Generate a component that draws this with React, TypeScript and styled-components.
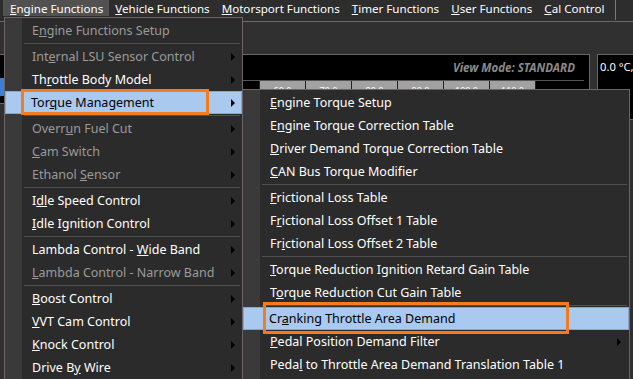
import React from "react";
import styled, { createGlobalStyle } from "styled-components";

const GlobalStyle = createGlobalStyle`
  html, body {
    margin: 0;
    padding: 0;
    background: #2f2f2f;
  }
  body {
    font-family: "Noto Sans", "Open Sans", sans-serif;
    font-size: 12px;
  }
`;

const Screen = styled.div`
  position: relative;
  width: 633px;
  height: 379px;
  overflow: hidden;
  background: #303030;
`;

const MenuBar = styled.div`
  display: flex;
  align-items: stretch;
  height: 22px;
  padding-left: 3px;
  background: #2d2d2d;
  border-bottom: 1px solid #6a6a6a;
  box-sizing: border-box;
`;

const BarItem = styled.div<{ $active?: boolean }>`
  display: flex;
  align-items: center;
  height: 16px;
  padding: 0 6px;
  color: #ffffff;
  font-size: 11.6px;
  background: ${(p) => (p.$active ? "#515151" : "transparent")};
  white-space: nowrap;

  &:first-child {
    padding: 0 6px 0 7px;
  }
`;

const BarDivider = styled.div`
  width: 1px;
  height: 20px;
  margin-left: 5px;
  background: #7a7a7a;
`;

const Workspace = styled.div`
  display: flex;
  gap: 7px;
  padding: 32px 0 0 0;
`;

const MainPanel = styled.div`
  flex: 0 0 590px;
  height: 50px;
  background: #000;
  border: 1px solid #666;
  border-left: none;
  box-sizing: border-box;
  display: flex;
  flex-direction: column;
`;

const PanelHead = styled.div`
  height: 25px;
  display: flex;
  align-items: center;
  justify-content: flex-end;
  padding-right: 14px;
  color: #8a8a8a;
  font-style: italic;
  font-weight: 700;
  font-size: 11.5px;
`;

const AxisRow = styled.div`
  display: flex;
  height: 16px;
  margin-right: 5px;
  border-top: 1px solid #555;
`;

const AxisCell = styled.div<{ $empty?: boolean }>`
  flex: ${(p) => (p.$empty ? "1" : "0 0 45px")};
  background: ${(p) => (p.$empty ? "#000" : "#a2a2a2")};
  border-left: 1px solid #222;
  color: #fff;
  font-size: 9px;
  line-height: 14px;
  padding-top: 3px;
  text-align: center;
`;

const SidePanel = styled.div`
  flex: 1;
  height: 60px;
  background: #000;
  border: 1px solid #666;
  border-right: none;
  color: #fff;
  padding: 4px 0 0 2px;
  font-size: 11.2px;
  white-space: nowrap;
  overflow: hidden;
`;

const Menu = styled.div<{ $left: number; $top: number; $width: number }>`
  position: absolute;
  left: ${(p) => p.$left}px;
  top: ${(p) => p.$top}px;
  width: ${(p) => p.$width}px;
  padding: 1px 0 20px;
  background: linear-gradient(
    to right,
    #3a3a3a 0,
    #3a3a3a 17px,
    #2b2b2b 17px
  );
  border: 1px solid #6c6468;
  box-sizing: border-box;
  font-size: 12.5px;
`;

const Row = styled.div<{ $dim?: boolean; $hot?: boolean }>`
  position: relative;
  display: flex;
  align-items: center;
  height: 23px;
  padding-left: ${(p) => (p.$hot ? "25px" : "26px")};
  margin: 0 ${(p) => (p.$hot ? "0" : "1px")};
  color: ${(p) => (p.$hot ? "#000" : p.$dim ? "#9b9b9b" : "#fff")};
  background: ${(p) => (p.$hot ? "#a9c9ee" : "transparent")};
  border: ${(p) => (p.$hot ? "1px solid #8aa6cc" : "none")};
  box-sizing: border-box;
  white-space: nowrap;
`;

const Arrow = styled.span<{ $right: number }>`
  position: absolute;
  right: ${(p) => p.$right}px;
  top: 50%;
  margin-top: -4px;
  width: 0;
  height: 0;
  border-top: 4px solid transparent;
  border-bottom: 4px solid transparent;
  border-left: 4px solid #000;
`;

const Separator = styled.div`
  height: 1px;
  margin: 1px 2px 1px 19px;
  background: #505050;
`;

const Callout = styled.div<{ $l: number; $t: number; $w: number; $h: number }>`
  position: absolute;
  left: ${(p) => p.$l}px;
  top: ${(p) => p.$t}px;
  width: ${(p) => p.$w}px;
  height: ${(p) => p.$h}px;
  border: 3px solid #f47b20;
  box-sizing: border-box;
  pointer-events: none;
`;

const LeftStrip = styled.div`
  position: absolute;
  left: 0;
  top: 78px;
  width: 4px;
  height: 18px;
  background: #3b7fd6;
`;

type Item = {
  label: React.ReactNode;
  dim?: boolean;
  hot?: boolean;
  sub?: boolean;
  sep?: boolean;
};

const mn = (before: string, key: string, after: string) => (
  <span>
    {before}
    <u>{key}</u>
    {after}
  </span>
);

const engineItems: Item[] = [
  { label: mn("E", "n", "gine Functions Setup"), dim: true },
  { sep: true, label: null },
  { label: mn("Int", "e", "rnal LSU Sensor Control"), dim: true, sub: true },
  { label: mn("Th", "r", "ottle Body Model"), sub: true },
  { label: mn("Tor", "q", "ue Management"), hot: true, sub: true },
  { sep: true, label: null },
  { label: mn("Overr", "u", "n Fuel Cut"), dim: true, sub: true },
  { label: mn("", "C", "am Switch"), dim: true, sub: true },
  { label: mn("Ethanol ", "S", "ensor"), dim: true, sub: true },
  { sep: true, label: null },
  { label: mn("I", "dl", "e Speed Control"), sub: true },
  { label: mn("", "I", "dle Ignition Control"), sub: true },
  { sep: true, label: null },
  { label: mn("Lambda Control - ", "W", "ide Band"), sub: true },
  { label: mn("", "L", "ambda Control - Narrow Band"), dim: true, sub: true },
  { sep: true, label: null },
  { label: mn("", "B", "oost Control"), sub: true },
  { label: mn("", "V", "VT Cam Control"), sub: true },
  { label: mn("", "K", "nock Control"), sub: true },
  { label: mn("Drive B", "y", " Wire"), sub: true },
];

const torqueItems: Item[] = [
  { label: mn("", "E", "ngine Torque Setup") },
  { label: mn("E", "n", "gine Torque Correction Table") },
  { label: mn("", "D", "river Demand Torque Correction Table") },
  { label: mn("", "C", "AN Bus Torque Modifier") },
  { sep: true, label: null },
  { label: mn("", "F", "rictional Loss Table") },
  { label: mn("F", "r", "ictional Loss Offset 1 Table") },
  { label: mn("Fr", "i", "ctional Loss Offset 2 Table") },
  { sep: true, label: null },
  { label: mn("", "T", "orque Reduction Ignition Retard Gain Table") },
  { label: mn("T", "o", "rque Reduction Cut Gain Table") },
  { sep: true, label: null },
  { label: mn("Cr", "a", "nking Throttle Area Demand"), hot: true },
  { label: mn("", "P", "edal Position Demand Filter"), sub: true },
  { label: mn("Peda", "l", " to Throttle Area Demand Translation Table 1") },
];

function MenuList({ items, arrowRight }: { items: Item[]; arrowRight: number }) {
  return (
    <>
      {items.map((item, i) =>
        item.sep ? (
          <Separator key={i} />
        ) : (
          <Row key={i} $dim={item.dim} $hot={item.hot}>
            {item.label}
            {item.sub && <Arrow $right={arrowRight} />}
          </Row>
        ),
      )}
    </>
  );
}

const barItems = [
  mn("", "E", "ngine Functions"),
  mn("", "V", "ehicle Functions"),
  mn("", "M", "otorsport Functions"),
  mn("", "T", "imer Functions"),
  mn("", "U", "ser Functions"),
  mn("", "C", "al Control"),
];

const axis = ["60.0", "70.0", "80.0", "90.0", "100.0", "110.0"];

export default function App() {
  return (
    <Screen>
      <GlobalStyle />
      <MenuBar>
        {barItems.map((label, i) => (
          <BarItem key={i} $active={i === 0}>
            {label}
          </BarItem>
        ))}
        <BarDivider />
      </MenuBar>
      <Workspace>
        <MainPanel>
          <PanelHead>View Mode: STANDARD</PanelHead>
          <AxisRow>
            <AxisCell $empty style={{ flex: "0 0 258px" }} />
            {axis.map((v) => (
              <AxisCell key={v}>{v}</AxisCell>
            ))}
            <AxisCell $empty />
          </AxisRow>
        </MainPanel>
        <SidePanel>0.0 °C,</SidePanel>
      </Workspace>
      <LeftStrip />
      <Menu $left={4} $top={17} $width={239}>
        <MenuList items={engineItems} arrowRight={6} />
      </Menu>
      <Menu $left={242} $top={89} $width={388}>
        <MenuList items={torqueItems} arrowRight={7} />
      </Menu>
      <Callout $l={21} $t={89} $w={188} $h={26} />
      <Callout $l={263} $t={302} $w={306} $h={32} />
    </Screen>
  );
}
